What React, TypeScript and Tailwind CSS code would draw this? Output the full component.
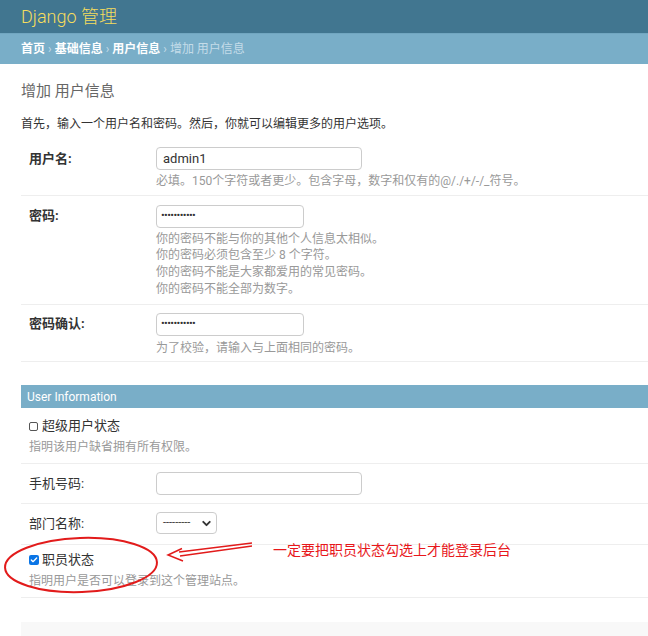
import { ChevronDown, Check } from "lucide-react";

const font = { fontFamily: "Roboto, 'Noto Sans CJK SC', sans-serif" };

const pwdHelp = [
  "你的密码不能与你的其他个人信息太相似。",
  "你的密码必须包含至少 8 个字符。",
  "你的密码不能是大家都爱用的常见密码。",
  "你的密码不能全部为数字。",
];

const Row = ({ children, className = "" }: { children: React.ReactNode; className?: string }) => (
  <div className={`flex border-b border-[#eee] pl-[8px] ${className}`}>{children}</div>
);

const Label = ({ text, bold }: { text: string; bold?: boolean }) => (
  <div className={`w-[127px] shrink-0 h-[23px] flex items-center text-[13px] text-[#333] ${bold ? "font-bold" : ""}`}>
    {text}
  </div>
);

const Help = ({ lines, mt = "mt-[3px]" }: { lines: string[]; mt?: string }) => (
  <div className={`${mt} text-[12px] leading-[16.7px] text-[#999]`}>
    {lines.map((l) => (
      <div key={l}>{l}</div>
    ))}
  </div>
);

const Dots = () => (
  <div className="h-[23px] w-[148px] border border-[#ccc] rounded-[4px] flex items-center px-[4px] text-[11px] tracking-[-0.6px] text-[#333]">
    •••••••••••
  </div>
);

export default function App() {
  return (
    <div className="relative w-[648px] h-[636px] overflow-hidden bg-white" style={font}>
      <div className="h-[33px] bg-[#417690] flex items-center pl-[21px]">
        <span className="text-[18px] font-light text-[#f5dd5d]">Django 管理</span>
      </div>
      <div className="h-[31px] bg-[#79aec8] border-t border-[#71a6c0] flex items-center pl-[21px] text-[12px] text-white">
        <span className="font-bold">首页</span>
        <span className="mx-[3px] text-[#c4dce8]">›</span>
        <span className="font-bold">基础信息</span>
        <span className="mx-[3px] text-[#c4dce8]">›</span>
        <span className="font-bold">用户信息</span>
        <span className="mx-[3px] text-[#c4dce8]">›</span>
        <span className="text-[#c4dce8]">增加 用户信息</span>
      </div>

      <div className="pl-[21px] pt-[17px]">
        <h1 className="text-[15px] leading-[20px] text-[#666]">增加 用户信息</h1>
        <p className="mt-[15px] text-[12px] leading-[16px] text-[#333]">
          首先，输入一个用户名和密码。然后，你就可以编辑更多的用户选项。
        </p>

        <div className="mt-[6px]">
          <Row className="pt-[9px] pb-[5px]">
            <Label text="用户名:" bold />
            <div>
              <div className="h-[23px] w-[206px] border border-[#ccc] rounded-[4px] flex items-center px-[6px] text-[13px] text-[#333]">
                admin1
              </div>
              <Help lines={["必填。150个字符或者更少。包含字母，数字和仅有的@/./+/-/_符号。"]} />
            </div>
          </Row>
          <Row className="pt-[9px] pb-[6px]">
            <Label text="密码:" bold />
            <div>
              <Dots />
              <Help lines={pwdHelp} mt="mt-[3px]" />
            </div>
          </Row>
          <Row className="pt-[8px] pb-[5px]">
            <Label text="密码确认:" bold />
            <div>
              <Dots />
              <Help lines={["为了校验，请输入与上面相同的密码。"]} mt="mt-[4px]" />
            </div>
          </Row>
        </div>

        <div className="mt-[23px]">
          <div className="h-[23px] bg-[#79aec8] flex items-center pl-[6px] text-[12px] text-white">User Information</div>

          <Row className="pt-[10px] pb-[7px]">
            <div>
              <div className="h-[16px] flex items-center text-[13px] text-[#333]">
                <span className="w-[9px] h-[9px] border border-[#555] rounded-[2px] mr-[4px]" />
                超级用户状态
              </div>
              <Help lines={["指明该用户缺省拥有所有权限。"]} mt="mt-[5px]" />
            </div>
          </Row>
          <Row className="pt-[8px] pb-[8px]">
            <Label text="手机号码:" />
            <div className="h-[23px] w-[206px] border border-[#ccc] rounded-[4px]" />
          </Row>
          <Row className="pt-[8px] pb-[9px]">
            <Label text="部门名称:" />
            <div className="relative h-[22px] w-[61px] border border-[#ccc] rounded-[4px] flex items-center pl-[6px] text-[11px] text-[#333]">
              ---------
              <ChevronDown className="absolute right-[3px] top-[4px] w-[13px] h-[13px]" strokeWidth={3.5} />
            </div>
          </Row>
          <Row className="pt-[7px] pb-[7px]">
            <div>
              <div className="h-[16px] flex items-center text-[13px] text-[#333]">
                <span className="w-[10px] h-[10px] bg-[#0a75e6] rounded-[2px] mr-[3px] flex items-center justify-center">
                  <Check className="w-[8px] h-[8px] text-white" strokeWidth={4} />
                </span>
                职员状态
              </div>
              <Help lines={["指明用户是否可以登录到这个管理站点。"]} mt="mt-[5px]" />
            </div>
          </Row>
        </div>

        <div className="mt-[24px] h-[60px] bg-[#f8f8f8]" />
      </div>

      <svg className="absolute left-0 top-0 pointer-events-none" width="648" height="636">
        <ellipse cx="81" cy="565" rx="76" ry="27" fill="none" stroke="#e21b1b" strokeWidth="2" transform="rotate(-2 81 565)" />
        <path d="M182 548.5 L168 555 L183 561" fill="none" stroke="#e21b1b" strokeWidth="1.5" />
        <path d="M179 552 L252 543 M180 556 L252 546" fill="none" stroke="#e21b1b" strokeWidth="1.3" />
      </svg>
      <div className="absolute left-[273px] top-[540px] text-[14px] leading-[20px] text-[#e8171b] whitespace-nowrap">
        一定要把职员状态勾选上才能登录后台
      </div>
    </div>
  );
}
